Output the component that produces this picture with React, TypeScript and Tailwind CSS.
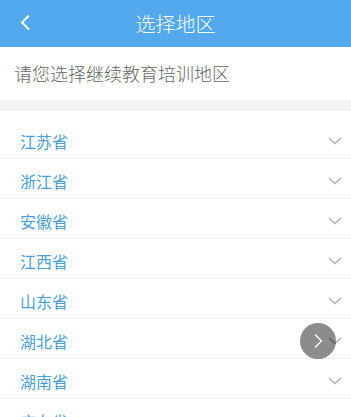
import { useState } from 'react';

const PROVINCES = ['江苏省', '浙江省', '安徽省', '江西省', '山东省', '湖北省', '湖南省', '广东省', '河南省', '河北省'];

function ChevronDown() {
  return (
    <svg width="14" height="8" viewBox="0 0 14 8" fill="none">
      <path d="M1 1l6 5.5L13 1" stroke="#b3b3b3" strokeWidth="1.6" />
    </svg>
  );
}

export default function App() {
  const [open, setOpen] = useState<string | null>(null);

  return (
    <div
      className="relative w-[351px] h-[417px] overflow-hidden bg-white"
      style={{ fontFamily: '"Noto Sans CJK SC", "Noto Sans", sans-serif' }}
    >
      {/* Header */}
      <div className="h-[47px] bg-[#52a9ee] flex items-center relative">
        <button className="absolute left-[20px] top-[14px]">
          <svg width="11" height="17" viewBox="0 0 11 17" fill="none">
            <path d="M9 1.5L2 8.5l7 7" stroke="#fff" strokeWidth="2" />
          </svg>
        </button>
        <h1 className="w-full text-center text-[20px] text-white font-light">选择地区</h1>
      </div>

      {/* Intro */}
      <div className="h-[53px] flex items-center px-[14px]">
        <p className="text-[18px] text-[#666] font-light">请您选择继续教育培训地区</p>
      </div>
      <div className="h-[11px] bg-[#f2f2f2]" />

      {/* List */}
      <ul className="pt-2">
        {PROVINCES.map((p) => (
          <li
            key={p}
            onClick={() => setOpen(open === p ? null : p)}
            className="h-10 flex items-center justify-between pl-[20px] pr-[9px] border-b border-[#f0f0f0] pt-[4px]"
          >
            <span className="text-[16px] text-[#4b9fd9]">{p}</span>
            <ChevronDown />
          </li>
        ))}
      </ul>

      {/* Floating button */}
      <button className="absolute left-[300px] top-[323px] w-[36px] h-[36px] rounded-full bg-black/45 flex items-center justify-center">
        <svg width="10" height="16" viewBox="0 0 10 16" fill="none">
          <path d="M2 1.5L8.5 8 2 14.5" stroke="#fff" strokeWidth="1.3" />
        </svg>
      </button>
    </div>
  );
}
